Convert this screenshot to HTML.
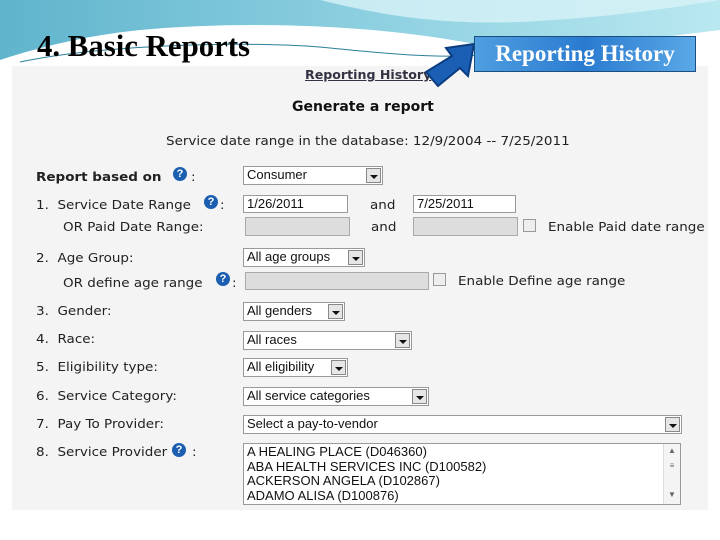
<!DOCTYPE html>
<html><head><meta charset="utf-8"><style>
body{margin:0;width:720px;height:540px;overflow:hidden;background:#fff;position:relative;font-family:"DejaVu Sans",sans-serif;}
.a{position:absolute;white-space:nowrap}
.lbl{position:absolute;font-size:12.5px;color:#222;font-family:"DejaVu Sans",sans-serif;transform:scaleX(1.08);transform-origin:left;white-space:nowrap}
.box{position:absolute;background:#fff;border:1px solid #999;box-sizing:border-box;font-family:"Liberation Sans",sans-serif;font-size:13px;color:#111;padding-left:3px;line-height:16px;overflow:hidden;white-space:nowrap}
.dis{background:#ddd;border-color:#aaa}
.sel .btn{position:absolute;right:1px;top:1px;width:15px;bottom:1px;background:#e6e6e6;border:1px solid #888;box-sizing:border-box}
.sel .btn:after{content:"";position:absolute;left:3px;top:6px;border-left:4px solid transparent;border-right:4px solid transparent;border-top:4px solid #111}
.cb{position:absolute;width:11px;height:11px;border:1px solid #999;background:#eee}
.q{position:absolute;width:14px;height:14px;border-radius:50%;background:#1c5fb0;color:#fff;font-size:11px;font-weight:bold;text-align:center;line-height:14px;font-family:"Liberation Sans",sans-serif}
</style></head><body>
<svg class="a" style="left:0;top:0" width="720" height="100">
<defs><linearGradient id="g" x1="0" y1="0" x2="1" y2="0"><stop offset="0" stop-color="#5fb4cc"/><stop offset="0.5" stop-color="#8ccfe0"/><stop offset="1" stop-color="#b9e8f0"/></linearGradient></defs>
<path d="M0 0H720V30C640 40 560 50 480 45C380 25 250 20 140 30C80 36 30 50 0 60Z" fill="url(#g)"/>
<path d="M320 0C380 15 440 25 520 22C600 18 660 10 720 0Z" fill="#d8f3f7" opacity="0.8"/>
<path d="M0 70C60 45 150 28 260 35C340 40 420 48 480 55" stroke="#fff" stroke-width="8" fill="none"/>
<path d="M20 62C100 45 250 40 330 48C400 55 440 58 480 55" stroke="#2a7f9a" stroke-width="1" fill="none"/>
</svg>
<div class="a" style="left:12px;top:66px;width:696px;height:444px;background:#f4f4f4"></div>
<div class="a" style="left:37px;top:30px;font-family:'Liberation Serif',serif;font-size:28px;font-weight:bold;color:#000;transform:scale(1.1,1.08);transform-origin:left top">4. Basic Reports</div>
<div class="a" style="left:305px;top:68px;font-size:12px;font-weight:bold;color:#334;text-decoration:underline;transform:scaleX(1.05);transform-origin:left">Reporting History</div>
<svg class="a" style="left:410px;top:36px" width="70" height="56"><path d="M64 8L36 12L42 20L16 36L28 50L50 32L58 40Z" fill="#1a5fb4" stroke="#0b3c80" stroke-width="2"/></svg>
<div class="a" style="left:474px;top:36px;width:222px;height:36px;box-sizing:border-box;border:1px solid #1a4f80;background:linear-gradient(90deg,#4f9ee0,#2a7bd0 50%,#5aa8e6);color:#fff;font-family:'Liberation Serif',serif;font-size:23px;font-weight:bold;line-height:34px;text-align:center;">Reporting History</div>
<div class="a" style="left:292px;top:99px;font-size:14px;font-weight:bold;color:#111;">Generate a report</div>
<div class="lbl" style="left:166px;top:133px;">Service date range in the database: 12/9/2004 -- 7/25/2011</div>

<div class="lbl" style="left:36px;top:169px;font-weight:bold;">Report based on</div>
<div class="q" style="left:173px;top:167px">?</div><div class="lbl" style="left:191px;top:169px">:</div>
<div class="box sel" style="left:243px;top:166px;width:140px;height:19px">Consumer<div class="btn"></div></div>

<div class="lbl" style="left:36px;top:197px">1.&nbsp; Service Date Range</div>
<div class="q" style="left:204px;top:195px">?</div><div class="lbl" style="left:220px;top:197px">:</div>
<div class="box" style="left:243px;top:195px;width:105px;height:18px">1/26/2011</div>
<div class="lbl" style="left:370px;top:197px">and</div>
<div class="box" style="left:413px;top:195px;width:103px;height:18px">7/25/2011</div>
<div class="lbl" style="left:63px;top:219px">OR Paid Date Range:</div>
<div class="box dis" style="left:245px;top:217px;width:105px;height:19px"></div>
<div class="lbl" style="left:371px;top:219px">and</div>
<div class="box dis" style="left:413px;top:217px;width:105px;height:19px"></div>
<div class="cb" style="left:523px;top:219px"></div>
<div class="lbl" style="left:548px;top:219px">Enable Paid date range</div>

<div class="lbl" style="left:36px;top:250px">2.&nbsp; Age Group:</div>
<div class="box sel" style="left:243px;top:248px;width:122px;height:19px">All age groups<div class="btn"></div></div>
<div class="lbl" style="left:63px;top:275px">OR define age range</div>
<div class="q" style="left:216px;top:272px">?</div><div class="lbl" style="left:232px;top:275px">:</div>
<div class="box dis" style="left:245px;top:272px;width:184px;height:18px"></div>
<div class="cb" style="left:433px;top:273px"></div>
<div class="lbl" style="left:458px;top:273px">Enable Define age range</div>

<div class="lbl" style="left:36px;top:303px">3.&nbsp; Gender:</div>
<div class="box sel" style="left:243px;top:302px;width:102px;height:19px">All genders<div class="btn"></div></div>
<div class="lbl" style="left:36px;top:331px">4.&nbsp; Race:</div>
<div class="box sel" style="left:243px;top:331px;width:169px;height:19px">All races<div class="btn"></div></div>
<div class="lbl" style="left:36px;top:359px">5.&nbsp; Eligibility type:</div>
<div class="box sel" style="left:243px;top:358px;width:105px;height:19px">All eligibility<div class="btn"></div></div>
<div class="lbl" style="left:36px;top:388px">6.&nbsp; Service Category:</div>
<div class="box sel" style="left:243px;top:387px;width:186px;height:19px">All service categories<div class="btn"></div></div>
<div class="lbl" style="left:36px;top:416px">7.&nbsp; Pay To Provider:</div>
<div class="box sel" style="left:243px;top:415px;width:439px;height:19px">Select a pay-to-vendor<div class="btn"></div></div>
<div class="lbl" style="left:36px;top:444px">8.&nbsp; Service Provider</div>
<div class="q" style="left:172px;top:443px">?</div><div class="lbl" style="left:192px;top:444px">:</div>
<div class="box" style="left:243px;top:443px;width:438px;height:62px;line-height:14.5px;padding-top:1px">A HEALING PLACE (D046360)<br>ABA HEALTH SERVICES INC (D100582)<br>ACKERSON ANGELA (D102867)<br>ADAMO ALISA (D100876)
<div style="position:absolute;right:0;top:0;bottom:0;width:16px;background:#f4f4f4;border-left:1px solid #ddd;font-size:8px;color:#666;text-align:center">▲<br>≡<br><br>▼</div></div>
</body></html>
